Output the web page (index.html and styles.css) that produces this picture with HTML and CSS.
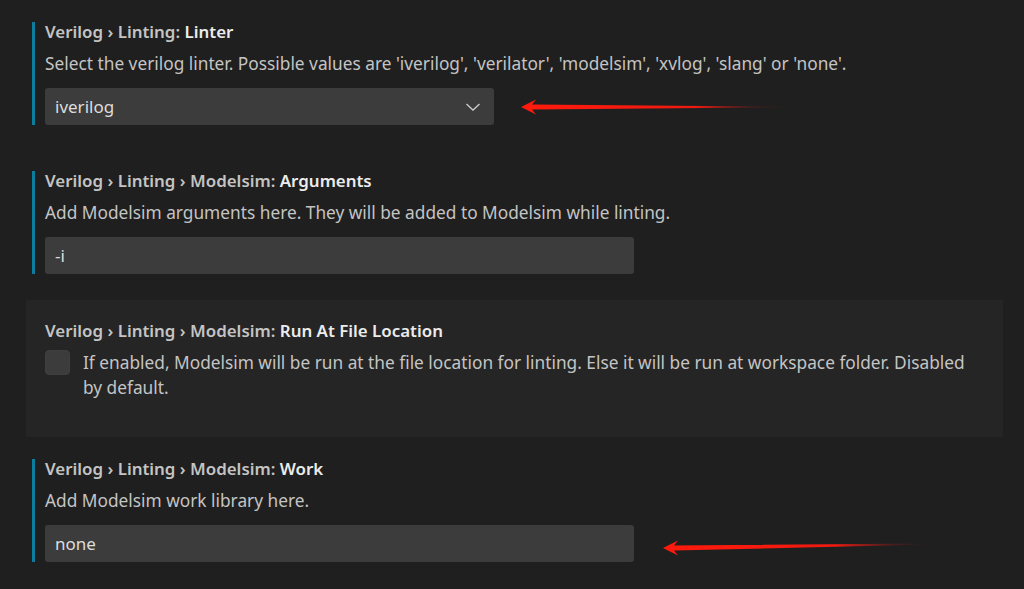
FILE: index.html
```html
<!DOCTYPE html>
<html>

<head>
  <title>Settings - Verilog Linting</title>
  <link rel="stylesheet" href="styles.css">
</head>

<body>
  <div class="settings-list">

    <div class="setting">
      <div class="setting-body modified">
        <div class="setting-title"><span class="category">Verilog › Linting: </span><span class="label">Linter</span></div>
        <div class="setting-desc">Select the verilog linter. Possible values are 'iverilog', 'verilator', 'modelsim', 'xvlog', 'slang' or 'none'.</div>
        <div class="control-row">
          <div class="select-box">
            <span>iverilog</span>
            <svg class="chevron" width="16" height="10" viewBox="0 0 16 10">
              <path d="M1.5 2 L8 8 L14.5 2" fill="none" stroke="#cccccc" stroke-width="1.3" />
            </svg>
          </div>
          <!-- annotation arrow -->
          <svg class="arrow arrow-select" width="270" height="20" viewBox="0 0 270 20">
            <defs>
              <linearGradient id="fadeA" gradientUnits="userSpaceOnUse" x1="0" y1="0" x2="268" y2="0">
                <stop offset="0" stop-color="#ff1a0c" />
                <stop offset="0.65" stop-color="#f01a10" />
                <stop offset="1" stop-color="#5a1c1c" stop-opacity="0" />
              </linearGradient>
            </defs>
            <polygon points="0,10 15,2.5 11,7.6 268,9.6 268,10.4 11,12.6 15,17.5" fill="url(#fadeA)" />
          </svg>
        </div>
      </div>
    </div>

    <div class="setting">
      <div class="setting-body modified">
        <div class="setting-title"><span class="category">Verilog › Linting › Modelsim: </span><span class="label">Arguments</span></div>
        <div class="setting-desc">Add Modelsim arguments here. They will be added to Modelsim while linting.</div>
        <div class="control-row">
          <div class="text-input">-i</div>
        </div>
      </div>
    </div>

    <div class="setting hovered">
      <div class="setting-body">
        <div class="setting-title"><span class="category">Verilog › Linting › Modelsim: </span><span class="label">Run At File Location</span></div>
        <div class="check-row">
          <div class="checkbox"></div>
          <div class="setting-desc check-desc">If enabled, Modelsim will be run at the file location for linting. Else it will be run at workspace folder. Disabled by default.</div>
        </div>
      </div>
    </div>

    <div class="setting">
      <div class="setting-body modified">
        <div class="setting-title"><span class="category">Verilog › Linting › Modelsim: </span><span class="label">Work</span></div>
        <div class="setting-desc">Add Modelsim work library here.</div>
        <div class="control-row">
          <div class="text-input">none</div>
          <svg class="arrow arrow-input" width="270" height="24" viewBox="0 0 270 24">
            <defs>
              <linearGradient id="fadeB" gradientUnits="userSpaceOnUse" x1="0" y1="0" x2="266" y2="0">
                <stop offset="0" stop-color="#ff1a0c" />
                <stop offset="0.65" stop-color="#f01a10" />
                <stop offset="1" stop-color="#5a1c1c" stop-opacity="0" />
              </linearGradient>
            </defs>
            <polygon points="0,14 15,6.5 11,11.5 266,9.6 266,10.4 11,16.6 15,21.5" fill="url(#fadeB)" />
          </svg>
        </div>
      </div>
    </div>

  </div>
</body>

</html>
```

FILE: styles.css
```css
body {
  margin: 0;
  background-color: #1f1f1f;
  font-family: 'Noto Sans', 'Open Sans', sans-serif;
  color: #cccccc;
  overflow: hidden;
}

.settings-list {
  width: 977px;
  margin-left: 26px;
}

.setting {
  padding: 22px 14px 24px 6px;
}

.setting.hovered {
  background-color: #252525;
  margin-top: 2px;
  padding-top: 21px;
  padding-bottom: 37px;
}

.setting-body {
  border-left: 3px solid transparent;
  padding-left: 10px;
}

.setting-body.modified {
  border-left-color: #0c7d9d;
}

.setting-title {
  font-size: 16.9px;
  line-height: 19px;
  font-weight: 600;
  white-space: nowrap;
}

.category {
  color: #c4c4c4;
}

.label {
  color: #ececec;
}

.setting-desc {
  margin-top: 10px;
  font-size: 17.3px;
  line-height: 25px;
  color: #c4c4c4;
}

.control-row {
  display: flex;
  align-items: center;
  margin-top: 12px;
}

.select-box,
.text-input {
  box-sizing: border-box;
  height: 37px;
  background-color: #3c3c3c;
  border-radius: 3px;
  color: #dddddd;
  font-size: 17px;
  padding: 0 10px;
  display: flex;
  align-items: center;
}

.select-box {
  width: 449px;
  justify-content: space-between;
}

.chevron {
  margin-right: 3px;
}

.text-input {
  width: 589px;
}

.arrow-select {
  margin-left: 27px;
}

.arrow-input {
  margin-left: 29px;
  margin-top: 4px;
}

.check-row {
  display: flex;
  align-items: flex-start;
  margin-top: 10px;
}

.checkbox {
  flex: none;
  width: 25px;
  height: 25px;
  box-sizing: border-box;
  background-color: #3c3c3c;
  border: 1px solid #3f3f3f;
  border-radius: 4px;
}

.check-desc {
  margin-top: 0;
  margin-left: 13px;
  max-width: 890px;
}
```
